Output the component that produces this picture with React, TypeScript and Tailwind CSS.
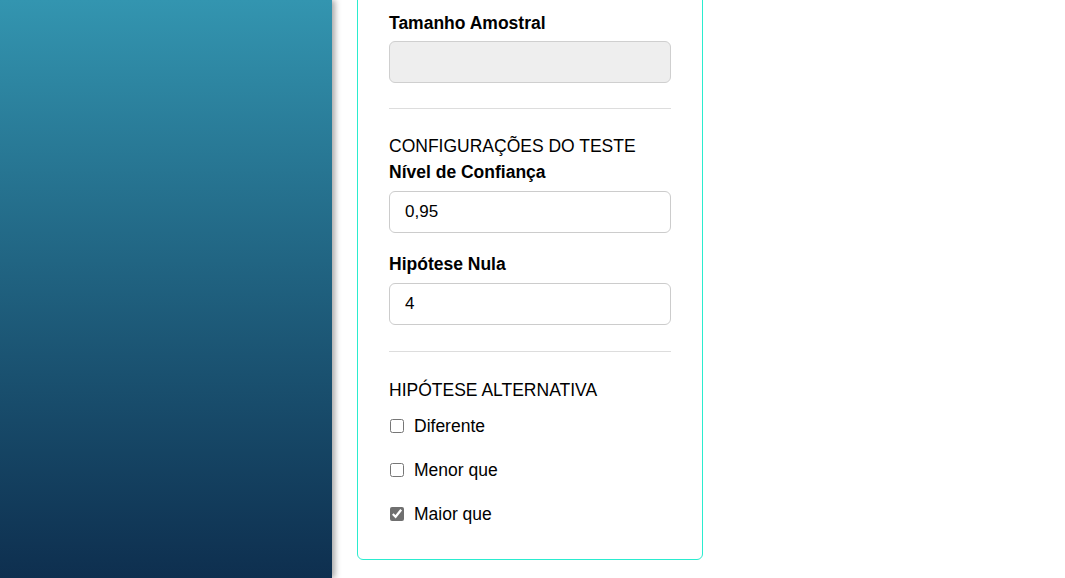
import { useState } from 'react';

const FONT = { fontFamily: '"Liberation Sans", Arial, sans-serif' };

function Field({
  label,
  value,
  disabled = false,
  gap = 'mb-[8px]',
}: {
  label: string;
  value: string;
  disabled?: boolean;
  gap?: string;
}) {
  return (
    <div className="flex flex-col">
      <label className={`text-[17.5px] font-bold leading-[20px] text-black ${gap}`}>{label}</label>
      <input
        readOnly
        disabled={disabled}
        value={value}
        className={`h-[42px] w-full rounded-[6px] border px-[15px] text-[17px] text-black outline-none ${
          disabled ? 'bg-[#eeeeee] border-[#cfcfcf]' : 'bg-white border-[#cccccc]'
        }`}
        style={FONT}
      />
    </div>
  );
}

function Check({ label, checked }: { label: string; checked: boolean }) {
  return (
    <label className="flex items-center h-[20px] text-[17.5px] text-black">
      <input
        type="checkbox"
        defaultChecked={checked}
        className="ml-[1px] mr-[10px] h-[14px] w-[14px] accent-[#6f6f6f]"
      />
      {label}
    </label>
  );
}

export default function App() {
  const [opts] = useState([
    { label: 'Diferente', checked: false },
    { label: 'Menor que', checked: false },
    { label: 'Maior que', checked: true },
  ]);

  return (
    <div className="flex h-[578px] w-full overflow-hidden bg-white" style={FONT}>
      <aside className="relative z-10 w-[332px] shrink-0 bg-gradient-to-b from-[#3395b0] to-[#0e2f4f] shadow-[3px_0_6px_rgba(0,0,0,0.35)]" />
      <main className="flex-1 pl-[25px]">
        <section className="-mt-[20px] w-[346px] rounded-[6px] border border-solid border-[#2aeccf] px-[31px] pt-[32px] pb-[35px]">
          <Field label="Tamanho Amostral" value="" disabled />
          <hr className="mt-[25px] mb-[27px] border-t border-[#dddddd]" />
          <div className="text-[17.5px] leading-[20px] text-black">CONFIGURAÇÕES DO TESTE</div>
          <div className="mt-[6px]">
            <Field label="Nível de Confiança" value="0,95" gap="mb-[9px]" />
          </div>
          <div className="mt-[21px]">
            <Field label="Hipótese Nula" value="4" gap="mb-[9px]" />
          </div>
          <hr className="mt-[26px] mb-[28px] border-t border-[#dddddd]" />
          <div className="text-[17.5px] leading-[20px] text-black">HIPÓTESE ALTERNATIVA</div>
          <div className="mt-[16px] flex flex-col gap-[24px]">
            {opts.map((o) => (
              <Check key={o.label} label={o.label} checked={o.checked} />
            ))}
          </div>
        </section>
      </main>
    </div>
  );
}
